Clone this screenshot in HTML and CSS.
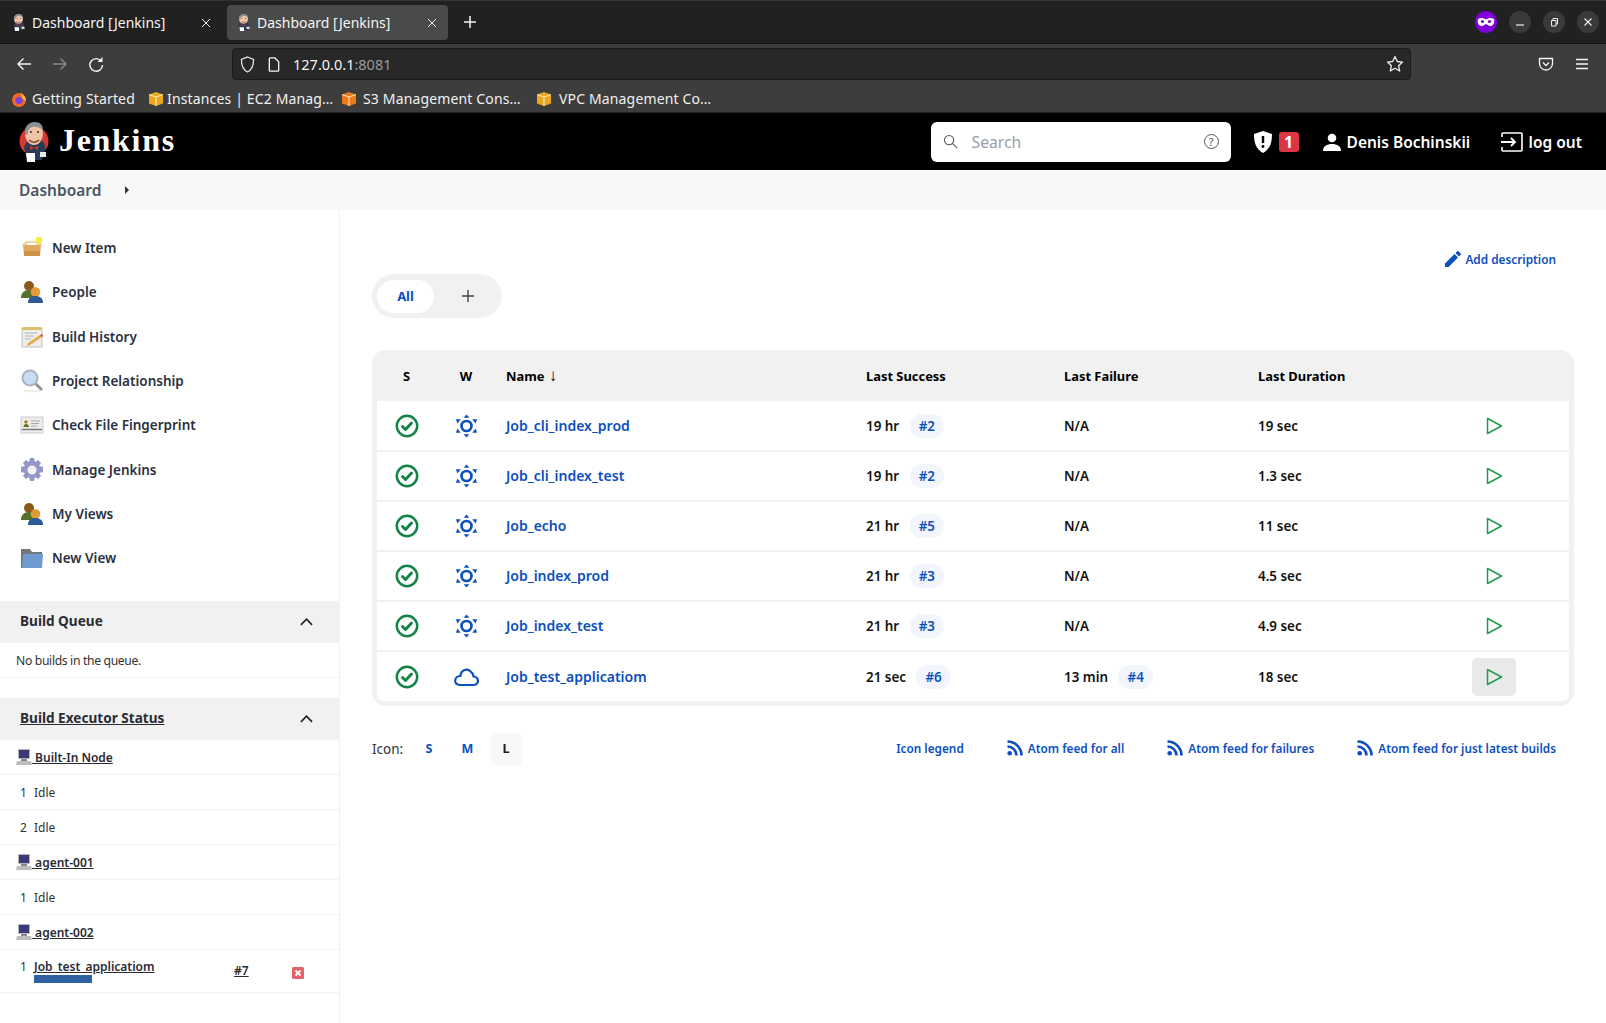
FILE: index.html
```html
<!DOCTYPE html>
<html lang="en">
<head>
    <meta charset="UTF-8">
    <title>Dashboard [Jenkins]</title>
    <link rel="stylesheet" href="styles.css">
</head>
<body>
    <!-- shared icons -->
    <svg class="defs" width="0" height="0">
        <symbol id="butler" viewBox="0 0 30 40" preserveAspectRatio="none">
            <path d="M6 29c-2-4 0-8 4-10l12-1c4 3 6 8 3 13l-2 7H8z" fill="#2b3a55"/>
            <ellipse cx="15" cy="12" rx="9" ry="11" fill="#f0c3a5"/>
            <path d="M6 12C5 4 10 0 16 0c5 0 8 3 8 8-3-3-8-4-11-3-3 1-4 4-5 8z" fill="#8c8f96"/>
            <path d="M10 18c3 3 7 3 10 0" fill="none" stroke="#7a3f2c" stroke-width="1.4"/>
            <circle cx="12" cy="10" r="1" fill="#333"/>
            <circle cx="19" cy="10" r="1" fill="#333"/>
            <path d="M11 24l4 2 4-2v4l-4-2-4 2z" fill="#d33833"/>
            <path d="M7 31h9v9H8z" fill="#fff"/>
            <path d="M21 30h6v5h-6z" fill="#e8e8e8"/>
        </symbol>
        <symbol id="box" viewBox="0 0 24 24">
            <path d="M3 9h18l-1 11H4z" fill="#e2ab63"/>
            <path d="M1 9l5-4h12l5 4z" fill="#f1d6a8"/>
            <path d="M4 15h16v5H4z" fill="#cf9344"/>
            <path d="M7 7h9v2H7z" fill="#fff"/>
            <circle cx="19" cy="4" r="3.2" fill="#f8ee3a"/>
        </symbol>
        <symbol id="people" viewBox="0 0 24 24">
            <circle cx="9" cy="6" r="5" fill="#8a5a1c"/>
            <path d="M1 18c0-5 3-8 8-8s6 3 6 8z" fill="#55702a"/>
            <circle cx="15.500" cy="12" r="4.800" fill="#e29a3a"/>
            <path d="M8 23c0-5 3-7 7.500-7s7.500 2 7.500 7z" fill="#2c5a94"/>
        </symbol>
        <symbol id="notepad" viewBox="0 0 24 24">
            <path d="M2 3h20v19H2z" fill="#efefe8" stroke="#b5b5b0" stroke-width=".8"/>
            <path d="M2 2h20v3H2z" fill="#d8c26c"/>
            <path d="M5 8h12M5 11h9M5 14h6" stroke="#aeb4b8"/>
            <path d="M8 18l12-8 2 2-12 8-3 1z" fill="#e3a94a"/>
            <path d="M20 10l2-1 1 2-1 1z" fill="#d33833"/>
        </symbol>
        <symbol id="lens" viewBox="0 0 24 24">
            <path d="M14 15l2-2 7 7-2 2z" fill="#8f9296"/>
            <circle cx="10" cy="9" r="7.5" fill="#c9dcf3" stroke="#a9b5c2" stroke-width="2"/>
            <ellipse cx="12" cy="22" rx="9" ry="1.3" fill="#eee"/>
        </symbol>
        <symbol id="card" viewBox="0 0 24 24">
            <path d="M1 4h22v16H1z" fill="#ecedea" stroke="#c0c2bf" stroke-width=".8"/>
            <path d="M3 8h6v6H3z" fill="#f5f1d9"/>
            <circle cx="6" cy="9" r="1.7" fill="#9a7c32"/>
            <path d="M3.5 14c0-2 1-3 2.500-3s3 1 3 3z" fill="#5e7030"/>
            <path d="M11 8h9M11 10.500h8M11 13h6" stroke="#a7a9a8"/>
            <path d="M2 16.500h20" stroke="#777" stroke-width="1.400"/>
        </symbol>
        <symbol id="gear" viewBox="0 0 24 24">
            <path d="M10 0h4l1 4 3-2 3 3-2 3 4 1v5l-4 1 2 3-3 3-3-2-1 4h-4l-1-4-3 2-3-3 2-3-4-1V9l4-1-2-3 3-3 3 2z" fill="#9396c6"/>
            <circle cx="12" cy="12" r="4.500" fill="#f2f2f7"/>
        </symbol>
        <symbol id="folder" viewBox="0 0 24 24">
            <path d="M1 3h9l2 3h10v16H1z" fill="#70767c"/>
            <path d="M3 8h20l-1 14H2z" fill="#6d9bd0"/>
        </symbol>
        <symbol id="computer" viewBox="0 0 16 16">
            <path d="M2 0h12v10H2z" fill="#b5b5bb"/>
            <path d="M3 1h10v8H3z" fill="#3a3a78"/>
            <path d="M5 10h6v2H5z" fill="#888"/>
            <path d="M1 12h14l1 4H0z" fill="#bdbdbd"/>
        </symbol>
        <symbol id="ok" viewBox="0 0 24 24">
            <circle cx="12" cy="12" r="10.200" fill="none" stroke="#138347" stroke-width="2.500"/>
            <path d="M7.500 12.500l3 3 6-6.500" fill="none" stroke="#138347" stroke-width="2.900" stroke-linecap="round" stroke-linejoin="round"/>
        </symbol>
        <symbol id="sun" viewBox="0 0 24 24">
            <circle cx="12" cy="12" r="5.200" fill="none" stroke="#0c4fbe" stroke-width="2.800"/>
            <path d="M12 0l3 3.500H9zM12 24l-3-3.500h6zM1 5h5L2.500 9.500zM23 5h-5l3.500 4.500zM1 19h5l-3.500-4.500zM23 19h-5l3.500-4.500z" fill="#0c4fbe"/>
        </symbol>
        <symbol id="cloud" viewBox="0 0 26 20">
            <path d="M7 18h13c7 0 6-8 .5-8.500C19.500 4 15 2 11.500 3 9 4 7.500 6 7.500 9 1 9 0 18 7 18z" fill="none" stroke="#0c4fbe" stroke-width="2.200" stroke-linejoin="round"/>
        </symbol>
        <symbol id="play" viewBox="0 0 18 18">
            <path d="M2.500 1.500v15L16.500 9z" fill="none" stroke="#1f9d4d" stroke-width="1.500" stroke-linejoin="round"/>
        </symbol>
        <symbol id="rss" viewBox="0 0 16 16">
            <circle cx="2.700" cy="13.300" r="2.300" fill="#0c4fbe"/>
            <path d="M.5 6.500a9 9 0 0 1 9 9M.5 1.500a14 14 0 0 1 14 14" fill="none" stroke="#0c4fbe" stroke-width="2.600"/>
        </symbol>
        <symbol id="aws" viewBox="0 0 16 16">
            <path d="M8 1l7 2.500v9L8 15l-7-2.500v-9z" fill="currentColor"/>
            <path d="M1 3.500L8 6l7-2.500M8 6v9" fill="none" stroke="#fff3cf" stroke-width=".9"/>
        </symbol>
        <symbol id="cross" viewBox="0 0 10 10">
            <path d="M1 1l8 8M9 1l-8 8" stroke="#eee" stroke-width="1"/>
        </symbol>
    </svg>

    <!-- browser chrome -->
    <div class="tabbar">
        <div class="tab">
            <svg class="favicon"><use href="#butler"/></svg>
            <span class="tab-title">Dashboard [Jenkins]</span>
            <svg class="tab-close"><use href="#cross"/></svg>
        </div>
        <div class="tab tab-active">
            <svg class="favicon"><use href="#butler"/></svg>
            <span class="tab-title">Dashboard [Jenkins]</span>
            <svg class="tab-close"><use href="#cross"/></svg>
        </div>
        <svg class="new-tab" viewBox="0 0 14 14"><path d="M7 1v12M1 7h12" stroke="#f5f5f5" stroke-width="1.500"/></svg>
        <div class="window-btns">
            <svg class="mask" viewBox="0 0 22 22">
                <circle cx="11" cy="11" r="11" fill="#8000d7"/>
                <path d="M3 8c3-1.500 5-1 8 .5 3-1.500 5-2 8-.5 1 4-1 7-3.500 7-2 0-3-1.500-4.500-2-1.500.5-2.500 2-4.500 2C4 15 2 12 3 8z" fill="#fff"/>
                <circle cx="7.500" cy="10.500" r="1.600" fill="#8000d7"/>
                <circle cx="14.500" cy="10.500" r="1.600" fill="#8000d7"/>
            </svg>
            <span class="win-btn"><svg viewBox="0 0 10 10"><path d="M1 8h8" stroke="#eee" stroke-width="1.200"/></svg></span>
            <span class="win-btn"><svg viewBox="0 0 10 10"><path d="M2.500 3.500h4.500v5.500H2.500zM4 3.500V1.500h4.500V7H7" fill="none" stroke="#eee"/></svg></span>
            <span class="win-btn"><svg viewBox="0 0 10 10"><path d="M1.500 1.500l7 7M8.500 1.500l-7 7" stroke="#eee" stroke-width="1.100"/></svg></span>
        </div>
    </div>

    <div class="navbar">
        <svg class="nav-icon" viewBox="0 0 16 16"><path d="M15 8H2M7.500 2.500L2 8l5.500 5.500" fill="none" stroke="#f5f5f5" stroke-width="1.400"/></svg>
        <svg class="nav-icon" viewBox="0 0 16 16"><path d="M1 8h13M8.500 2.500L14 8l-5.500 5.500" fill="none" stroke="#8a8a8a" stroke-width="1.400"/></svg>
        <svg class="nav-icon" viewBox="0 0 16 16"><path d="M13.500 5.500A6.300 6.300 0 1 0 14.500 9" fill="none" stroke="#f5f5f5" stroke-width="1.400"/><path d="M14.500 1v5h-5z" fill="#f5f5f5"/></svg>
        <div class="urlbar">
            <svg class="url-shield" viewBox="0 0 16 18"><path d="M8 1l6.500 2.500c0 6-1 11-6.500 13.500C2.500 14.500 1.500 9.500 1.500 3.500z" fill="none" stroke="#eee" stroke-width="1.300"/></svg>
            <svg class="url-page" viewBox="0 0 12 16"><path d="M1 2a1 1 0 0 1 1-1h5l4 4v9a1 1 0 0 1-1 1H2a1 1 0 0 1-1-1z" fill="none" stroke="#f5f5f5" stroke-width="1.400"/></svg>
            <span class="url-text">127.0.0.1<span class="url-port">:8081</span></span>
            <svg class="url-star" viewBox="0 0 18 18"><path d="M9 1.500l2.300 5 5.200.6-3.900 3.600 1.100 5.300L9 13.300 4.300 16l1.100-5.300L1.500 7.100l5.200-.6z" fill="none" stroke="#eee" stroke-width="1.300" stroke-linejoin="round"/></svg>
        </div>
        <svg class="nav-icon" viewBox="0 0 16 16"><path d="M1.500 2.500h13v5a6.500 6.500 0 0 1-13 0z" fill="none" stroke="#f5f5f5" stroke-width="1.300" stroke-linejoin="round"/><path d="M5 6.500l3 3 3-3" fill="none" stroke="#f5f5f5" stroke-width="1.300"/></svg>
        <svg class="nav-icon" viewBox="0 0 16 16"><path d="M2 3.500h12M2 8h12M2 12.500h12" stroke="#f5f5f5" stroke-width="1.300"/></svg>
    </div>

    <div class="bookmarks">
        <span class="bookmark">
            <svg class="bm-icon" viewBox="0 0 16 16">
                <circle cx="8" cy="9" r="7" fill="#f2672a"/>
                <path d="M10 1c1 3 5 4 5 9l-4-3z" fill="#fcc030"/>
                <circle cx="8" cy="9.500" r="3.600" fill="#7542e5"/>
            </svg>Getting Started</span>
        <span class="bookmark"><svg class="bm-icon bm-aws"><use href="#aws"/></svg>Instances | EC2 Manag…</span>
        <span class="bookmark"><svg class="bm-icon bm-s3"><use href="#aws"/></svg>S3 Management Cons…</span>
        <span class="bookmark"><svg class="bm-icon bm-aws"><use href="#aws"/></svg>VPC Management Co…</span>
    </div>

    <!-- jenkins header -->
    <header class="page-header">
        <svg class="logo" viewBox="0 0 30 40">
            <circle cx="15" cy="19" r="14.500" fill="#d33833"/>
            <use href="#butler" width="30" height="40"/>
        </svg>
        <span class="logo-text">Jenkins</span>
        <div class="search">
            <svg class="search-icon" viewBox="0 0 16 16"><circle cx="6.500" cy="6.500" r="5" fill="none" stroke="#555" stroke-width="1.100"/><path d="M10 10l5 5" stroke="#555" stroke-width="1.100"/></svg>
            <span class="search-text">Search</span>
            <span class="search-help">?</span>
        </div>
        <svg class="alert-shield" viewBox="0 0 18 22"><path d="M9 0l9 3c0 9-2 15-9 19C2 18 0 12 0 3z" fill="#fff"/><path d="M9 5v7" stroke="#000" stroke-width="2.400"/><circle cx="9" cy="15.500" r="1.400" fill="#000"/></svg>
        <span class="alert-count">1</span>
        <svg class="user-icon" viewBox="0 0 18 18"><circle cx="9" cy="5" r="4.300" fill="#fff"/><path d="M0 18c0-5 4-7 9-7s9 2 9 7z" fill="#fff"/></svg>
        <span class="header-link user-name">Denis Bochinskii</span>
        <svg class="logout-icon" viewBox="0 0 22 20"><path d="M1 5V2a1 1 0 0 1 1-1h18a1 1 0 0 1 1 1v16a1 1 0 0 1-1 1H2a1 1 0 0 1-1-1v-3" fill="none" stroke="#fff" stroke-width="1.600"/><path d="M0 10h14M10 6l4 4-4 4" fill="none" stroke="#fff" stroke-width="1.800"/></svg>
        <span class="header-link">log out</span>
    </header>

    <div class="breadcrumbs">
        <span class="crumb">Dashboard</span>
        <span class="crumb-arrow"></span>
    </div>

    <div class="page-body">
        <aside class="sidebar">
            <nav class="side-nav">
                <a class="side-item"><svg class="side-icon"><use href="#box"/></svg>New Item</a>
                <a class="side-item"><svg class="side-icon"><use href="#people"/></svg>People</a>
                <a class="side-item"><svg class="side-icon"><use href="#notepad"/></svg>Build History</a>
                <a class="side-item"><svg class="side-icon"><use href="#lens"/></svg>Project Relationship</a>
                <a class="side-item"><svg class="side-icon"><use href="#card"/></svg>Check File Fingerprint</a>
                <a class="side-item"><svg class="side-icon"><use href="#gear"/></svg>Manage Jenkins</a>
                <a class="side-item"><svg class="side-icon"><use href="#people"/></svg>My Views</a>
                <a class="side-item"><svg class="side-icon"><use href="#folder"/></svg>New View</a>
            </nav>

            <section class="pane">
                <div class="pane-head">
                    <span class="pane-title">Build Queue</span>
                    <svg class="chevron" viewBox="0 0 14 8"><path d="M1 7l6-6 6 6" fill="none" stroke="#222" stroke-width="1.800"/></svg>
                </div>
                <div class="queue-empty">No builds in the queue.</div>
            </section>

            <section class="pane pane-exec">
                <div class="pane-head">
                    <span class="pane-title underlined">Build Executor Status</span>
                    <svg class="chevron" viewBox="0 0 14 8"><path d="M1 7l6-6 6 6" fill="none" stroke="#222" stroke-width="1.800"/></svg>
                </div>
                <div class="exec-row node-row"><svg class="node-icon"><use href="#computer"/></svg><span class="underlined">&nbsp;Built-In Node</span></div>
                <div class="exec-row"><span class="exec-num">1</span>Idle</div>
                <div class="exec-row"><span class="exec-num">2</span>Idle</div>
                <div class="exec-row node-row"><svg class="node-icon"><use href="#computer"/></svg><span class="underlined">&nbsp;agent-001</span></div>
                <div class="exec-row"><span class="exec-num">1</span>Idle</div>
                <div class="exec-row node-row"><svg class="node-icon"><use href="#computer"/></svg><span class="underlined">&nbsp;agent-002</span></div>
                <div class="exec-row exec-busy">
                    <span class="exec-num">1</span>
                    <div class="exec-job">
                        <span class="underlined node-row">Job_test_applicatiom</span>
                        <div class="exec-bar"></div>
                    </div>
                    <span class="underlined node-row exec-build">#7</span>
                    <svg class="exec-stop" viewBox="0 0 12 12"><rect width="12" height="12" rx="1.500" fill="#e4606a"/><path d="M3.500 3.500l5 5M8.500 3.500l-5 5" stroke="#fff" stroke-width="1.800"/></svg>
                </div>
            </section>
        </aside>

        <main class="content">
            <div class="desc-row">
                <a class="link-strong desc-link">
                    <svg class="pencil" viewBox="0 0 16 16"><path d="M0 16v-3.500L9.500 3 13 6.500 3.500 16zM10.500 2l1.700-1.700a1 1 0 0 1 1.400 0l2.100 2.100a1 1 0 0 1 0 1.400L14 5.500z" fill="#0c4fbe"/></svg>Add description</a>
            </div>

            <div class="view-tabs">
                <span class="view-tab">All</span>
                <svg class="view-add" viewBox="0 0 12 12"><path d="M6 0v12M0 6h12" stroke="#444" stroke-width="1.400"/></svg>
            </div>

            <div class="projects">
                <table class="projects-table">
                    <thead>
                        <tr>
                            <th class="col-s">S</th>
                            <th class="col-w">W</th>
                            <th class="col-name">Name <span class="sort-arrow">↓</span></th>
                            <th class="col-success">Last Success</th>
                            <th class="col-failure">Last Failure</th>
                            <th class="col-duration">Last Duration</th>
                            <th></th>
                        </tr>
                    </thead>
                    <tbody>
                        <tr>
                            <td class="col-s"><svg class="status-icon"><use href="#ok"/></svg></td>
                            <td class="col-w"><svg class="weather-icon"><use href="#sun"/></svg></td>
                            <td class="col-name"><a class="job-link">Job_cli_index_prod</a></td>
                            <td>19 hr <span class="build-pill">#2</span></td>
                            <td>N/A</td>
                            <td>19 sec</td>
                            <td class="col-play"><span class="play-btn"><svg class="play-icon"><use href="#play"/></svg></span></td>
                        </tr>
                        <tr>
                            <td class="col-s"><svg class="status-icon"><use href="#ok"/></svg></td>
                            <td class="col-w"><svg class="weather-icon"><use href="#sun"/></svg></td>
                            <td class="col-name"><a class="job-link">Job_cli_index_test</a></td>
                            <td>19 hr <span class="build-pill">#2</span></td>
                            <td>N/A</td>
                            <td>1.3 sec</td>
                            <td class="col-play"><span class="play-btn"><svg class="play-icon"><use href="#play"/></svg></span></td>
                        </tr>
                        <tr>
                            <td class="col-s"><svg class="status-icon"><use href="#ok"/></svg></td>
                            <td class="col-w"><svg class="weather-icon"><use href="#sun"/></svg></td>
                            <td class="col-name"><a class="job-link">Job_echo</a></td>
                            <td>21 hr <span class="build-pill">#5</span></td>
                            <td>N/A</td>
                            <td>11 sec</td>
                            <td class="col-play"><span class="play-btn"><svg class="play-icon"><use href="#play"/></svg></span></td>
                        </tr>
                        <tr>
                            <td class="col-s"><svg class="status-icon"><use href="#ok"/></svg></td>
                            <td class="col-w"><svg class="weather-icon"><use href="#sun"/></svg></td>
                            <td class="col-name"><a class="job-link">Job_index_prod</a></td>
                            <td>21 hr <span class="build-pill">#3</span></td>
                            <td>N/A</td>
                            <td>4.5 sec</td>
                            <td class="col-play"><span class="play-btn"><svg class="play-icon"><use href="#play"/></svg></span></td>
                        </tr>
                        <tr>
                            <td class="col-s"><svg class="status-icon"><use href="#ok"/></svg></td>
                            <td class="col-w"><svg class="weather-icon"><use href="#sun"/></svg></td>
                            <td class="col-name"><a class="job-link">Job_index_test</a></td>
                            <td>21 hr <span class="build-pill">#3</span></td>
                            <td>N/A</td>
                            <td>4.9 sec</td>
                            <td class="col-play"><span class="play-btn"><svg class="play-icon"><use href="#play"/></svg></span></td>
                        </tr>
                        <tr>
                            <td class="col-s"><svg class="status-icon"><use href="#ok"/></svg></td>
                            <td class="col-w"><svg class="cloud-icon"><use href="#cloud"/></svg></td>
                            <td class="col-name"><a class="job-link">Job_test_applicatiom</a></td>
                            <td>21 sec <span class="build-pill">#6</span></td>
                            <td>13 min <span class="build-pill">#4</span></td>
                            <td>18 sec</td>
                            <td class="col-play"><span class="play-btn play-hover"><svg class="play-icon"><use href="#play"/></svg></span></td>
                        </tr>
                    </tbody>
                </table>
            </div>

            <div class="legend-row">
                <span class="icon-label">Icon:</span>
                <span class="size-btn">S</span>
                <span class="size-btn">M</span>
                <span class="size-btn size-current">L</span>
                <div class="feeds">
                    <a class="link-strong">Icon legend</a>
                    <a class="link-strong"><svg class="rss-icon"><use href="#rss"/></svg>Atom feed for all</a>
                    <a class="link-strong"><svg class="rss-icon"><use href="#rss"/></svg>Atom feed for failures</a>
                    <a class="link-strong"><svg class="rss-icon"><use href="#rss"/></svg>Atom feed for just latest builds</a>
                </div>
            </div>
        </main>
    </div>
</body>
</html>
```

FILE: styles.css
```css
* {
    box-sizing: border-box;
}

html, body {
    height: 1023px;
    margin: 0;
    overflow: hidden;
}

body {
    background-color: #fff;
    color: #222;
    font-family: "Noto Sans", "Open Sans", sans-serif;
    font-size: 14px;
    display: flex;
    flex-direction: column;
}

.defs {
    position: absolute;
}

/* browser chrome */
.tabbar {
    height: 44px;
    flex: none;
    display: flex;
    align-items: flex-start;
    padding-top: 4px;
    background-color: #212121;
    border-top: 1px solid #333;
    border-bottom: 1px solid #111;
    color: #f5f5f5;
}

.tab {
    width: 227px;
    height: 35px;
    padding: 0 14px 0 11px;
    display: flex;
    align-items: center;
    border-radius: 4px;
}

.tab-active {
    width: 221px;
    padding: 0 9px;
    background-color: #4a4a4a;
}

.favicon {
    width: 15px;
    height: 17px;
    margin-right: 6px;
}

.tab-title {
    flex: 1;
    font-size: 14px;
    white-space: nowrap;
}

.tab-close {
    width: 10px;
    height: 10px;
    margin-right: 2px;
}

.new-tab {
    width: 14px;
    height: 14px;
    margin: 10px 0 0 15px;
}

.window-btns {
    margin-left: auto;
    padding-right: 7px;
    display: flex;
    align-items: center;
    gap: 12px;
    margin-top: 6px;
}

.mask {
    width: 22px;
    height: 22px;
}

.win-btn {
    width: 22px;
    height: 22px;
    border-radius: 50%;
    background-color: #3a3a3a;
    display: flex;
    align-items: center;
    justify-content: center;
}

.win-btn svg {
    width: 10px;
    height: 10px;
}

.navbar {
    height: 43px;
    flex: none;
    display: flex;
    align-items: center;
    padding: 0 6px 3px;
    background-color: #3d3d3d;
}

.nav-icon {
    width: 16px;
    height: 16px;
    margin: 0 10px;
    flex: none;
}

.urlbar {
    width: 1179px;
    height: 32px;
    margin-left: 118px;
    margin-right: 117px;
    padding: 0 6px 0 7px;
    display: flex;
    align-items: center;
    flex: none;
    background-color: #282828;
    border: 1px solid #1b1b1b;
    border-radius: 4px;
    font-size: 14.5px;
    color: #f5f5f5;
}

.url-shield {
    width: 15px;
    height: 17px;
}

.url-page {
    width: 12px;
    height: 15px;
    margin-left: 13px;
}

.url-text {
    margin-left: 13px;
}

.url-port {
    color: #9a9a9a;
}

.url-star {
    width: 18px;
    height: 18px;
    margin-left: auto;
}

.bookmarks {
    height: 26px;
    flex: none;
    display: flex;
    align-items: center;
    padding: 0 0 2px 11px;
    background-color: #3d3d3d;
    border-bottom: 1px solid #222;
    color: #f1f1f1;
    font-size: 14px;
    letter-spacing: .15px;
    white-space: nowrap;
}

.bookmark {
    display: flex;
    align-items: center;
    gap: 5px;
    width: 195px;
}

.bookmark:first-child {
    width: 137px;
}

.bookmark:nth-child(2) {
    width: 193px;
    gap: 3px;
}

.bookmark:nth-child(3) {
    gap: 6px;
}

.bookmark:nth-child(4) {
    gap: 7px;
}

.bm-icon {
    width: 16px;
    height: 16px;
}

.bm-aws {
    color: #e9a820;
}

.bm-s3 {
    color: #ec7b1c;
}

/* jenkins header */
.page-header {
    height: 57px;
    flex: none;
    display: flex;
    align-items: center;
    padding: 0 24px 0 19px;
    background-color: #000;
    color: #fff;
}

.logo {
    width: 30px;
    height: 40px;
    margin-right: 10px;
}

.logo-text {
    margin-top: -2px;
    font-family: "Liberation Serif", serif;
    font-weight: 700;
    font-size: 32px;
    letter-spacing: 1.7px;
}

.search {
    width: 300px;
    height: 40px;
    margin-left: auto;
    padding: 0 12px;
    display: flex;
    align-items: center;
    background-color: #fff;
    border-radius: 6px;
}

.search-icon {
    width: 15px;
    height: 15px;
}

.search-text {
    flex: 1;
    margin-left: 14px;
    color: #9aa0a8;
    font-size: 15.7px;
}

.search-help {
    width: 15px;
    height: 15px;
    border: 1px solid #555;
    border-radius: 50%;
    color: #555;
    font-size: 11px;
    line-height: 13px;
    text-align: center;
}

.alert-shield {
    width: 18px;
    height: 22px;
    margin-left: 23px;
}

.alert-count {
    width: 20px;
    height: 20px;
    margin-left: 7px;
    border-radius: 3px;
    background-color: #dc3545;
    font-size: 16px;
    font-weight: 700;
    line-height: 20px;
    text-align: center;
}

.user-icon {
    width: 18px;
    height: 18px;
    margin-left: 24px;
    margin-right: 6px;
}

.header-link {
    font-size: 15.5px;
    font-weight: 600;
    white-space: nowrap;
}

.user-name {
    width: 154px;
}

.logout-icon {
    width: 22px;
    height: 20px;
    margin-right: 6px;
}

.breadcrumbs {
    height: 40px;
    flex: none;
    display: flex;
    align-items: center;
    padding-left: 19px;
    background-color: #f8f8f8;
}

.crumb {
    font-size: 15.5px;
    font-weight: 600;
    color: #4b5563;
}

.crumb-arrow {
    margin-left: 24px;
    border-left: 4px solid #333;
    border-top: 4px solid transparent;
    border-bottom: 4px solid transparent;
}

.page-body {
    flex: 1;
    display: flex;
    min-height: 0;
}

/* sidebar */
.sidebar {
    width: 340px;
    flex: none;
    border-right: 1px solid #f1f1f1;
}

.side-nav {
    padding-top: 16px;
}

.side-item {
    height: 44.3px;
    padding-left: 20px;
    display: flex;
    align-items: center;
    gap: 8px;
    font-size: 13.5px;
    font-weight: 600;
    color: #2a3140;
}

.side-icon {
    width: 24px;
    height: 24px;
}

.pane {
    margin-top: 21px;
}

.pane-exec {
    margin-top: 20px;
}

.pane-head {
    height: 42px;
    padding: 0 26px 0 20px;
    display: flex;
    align-items: center;
    justify-content: space-between;
    background-color: #f1f1f1;
    font-size: 13.6px;
    font-weight: 700;
    color: #2b2b33;
}

.pane-title {
    margin-top: -3px;
}

.chevron {
    width: 13px;
    height: 8px;
}

.queue-empty {
    height: 35px;
    padding-left: 16px;
    display: flex;
    align-items: center;
    border-bottom: 1px solid #f1f1f1;
    font-size: 12.2px;
    letter-spacing: -.35px;
    color: #333;
}

.exec-row {
    height: 35px;
    padding: 0 0 0 20px;
    display: flex;
    align-items: center;
    border-bottom: 1px solid #f1f1f1;
    font-size: 12px;
    color: #333;
}

.node-row {
    padding-left: 16px;
    font-weight: 600;
    font-size: 12px;
    color: #2b2b33;
}

.underlined {
    text-decoration: underline;
}

.node-icon {
    width: 16px;
    height: 16px;
}

.exec-num {
    width: 14px;
}

.exec-busy {
    height: 43px;
    align-items: flex-start;
    padding-top: 8px;
}

.exec-job {
    width: 200px;
}

.exec-busy .node-row {
    padding-left: 0;
}

.exec-bar {
    width: 58px;
    height: 8px;
    background-color: #2f62a5;
}

.exec-build {
    margin-top: 4px;
    width: 58px;
}

.exec-stop {
    width: 12px;
    height: 12px;
    margin-top: 9px;
}

/* main */
.content {
    flex: 1;
    padding: 0 32px;
    min-width: 0;
}

.desc-row {
    height: 64px;
    padding: 34px 18px 0 0;
    display: flex;
    justify-content: flex-end;
}

.link-strong {
    display: inline-flex;
    align-items: center;
    font-size: 11.8px;
    font-weight: 600;
    color: #0c4fbe;
    white-space: nowrap;
}

.pencil {
    width: 16px;
    height: 16px;
    margin-right: 4px;
}

.view-tabs {
    width: 130px;
    height: 44px;
    padding: 0 6px 0 5px;
    display: flex;
    align-items: center;
    background-color: #f1f1f1;
    border-radius: 22px;
}

.view-tab {
    width: 57px;
    height: 33px;
    border-radius: 17px;
    background-color: #fff;
    color: #0c4fbe;
    font-size: 13px;
    font-weight: 700;
    line-height: 33px;
    text-align: center;
}

.view-add {
    width: 12px;
    height: 12px;
    margin-left: 28px;
}

.projects {
    margin-top: 32px;
    padding: 0 5px 5px;
    background-color: #f1f1f1;
    border-radius: 14px;
}

.projects-table {
    width: 100%;
    table-layout: fixed;
    border-collapse: separate;
    border-spacing: 0;
}

.projects-table th {
    height: 51px;
    padding: 1px 0 0;
    text-align: left;
    font-size: 12.9px;
    font-weight: 700;
    color: #000;
}

.projects-table td {
    height: 50px;
    padding: 0;
    background-color: #fff;
    border-top: 2px solid #f1f1f1;
    font-size: 13.4px;
    font-weight: 600;
    color: #111;
}

.projects-table tbody tr:first-child td {
    height: 49px;
    border-top: 0;
}

.projects-table tbody tr:last-child td {
    height: 51px;
}

.projects-table tbody tr:last-child td:first-child {
    border-bottom-left-radius: 6px;
}

.projects-table tbody tr:last-child td:last-child {
    border-bottom-right-radius: 6px;
}

.projects-table th.col-s,
.projects-table td.col-s {
    width: 59px;
    text-align: center;
}

.projects-table th.col-w,
.projects-table td.col-w {
    width: 60px;
    text-align: center;
}

.projects-table .col-name {
    width: 370px;
    padding-left: 10px;
}

.col-success {
    width: 198px;
}

.col-failure {
    width: 194px;
}

.col-duration {
    width: 214px;
}

.sort-arrow {
    display: inline-block;
    margin-left: 1px;
    font-size: 17px;
    font-weight: 400;
    line-height: 12px;
}

.status-icon {
    width: 24px;
    height: 24px;
    display: block;
    margin: 0 auto;
}

.weather-icon {
    width: 23px;
    height: 24px;
    display: block;
    margin: 0 auto;
}

.cloud-icon {
    width: 26px;
    height: 20px;
    display: block;
    margin: 0 auto;
}

.job-link {
    display: block;
    margin-top: -1px;
    color: #0c4fbe;
    font-size: 14px;
}

.build-pill {
    display: inline-block;
    height: 24px;
    margin-left: 7px;
    padding: 0 9px;
    border-radius: 12px;
    background-color: #f2f5fb;
    color: #0c4fbe;
    line-height: 24px;
}

.play-btn {
    width: 44px;
    height: 38px;
    display: flex;
    align-items: center;
    justify-content: center;
    border-radius: 5px;
}

.play-hover {
    background-color: #e9e9e9;
}

.play-icon {
    width: 18px;
    height: 18px;
}

.legend-row {
    height: 32px;
    margin-top: 27px;
    padding-right: 18px;
    display: flex;
    align-items: center;
}

.icon-label {
    width: 41px;
    font-size: 13.5px;
    color: #333;
}

.size-btn {
    width: 32px;
    height: 32px;
    margin-right: 6.5px;
    border-radius: 5px;
    color: #0c4fbe;
    font-size: 12.5px;
    font-weight: 700;
    line-height: 32px;
    text-align: center;
}

.size-current {
    background-color: #f8f8f8;
    color: #222;
}

.feeds {
    margin-top: -2px;
    margin-left: auto;
    display: flex;
    align-items: center;
    gap: 43px;
}

.rss-icon {
    width: 16px;
    height: 16px;
    margin-right: 5px;
}
```
